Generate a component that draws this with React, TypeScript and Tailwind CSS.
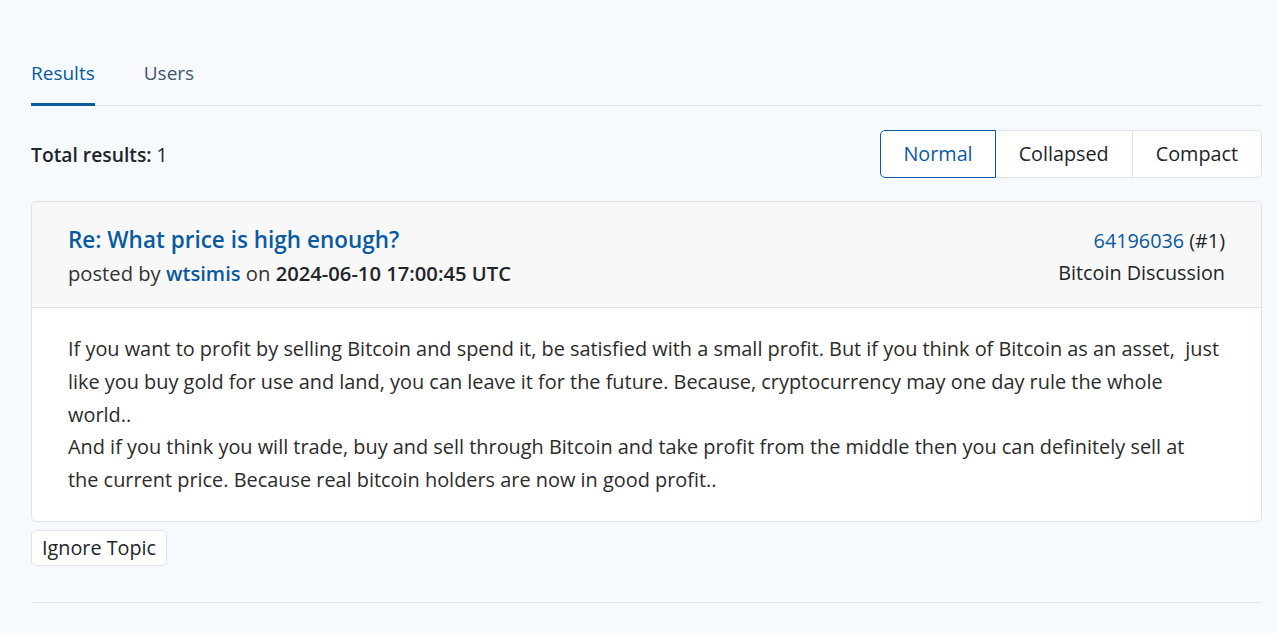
import React, { useState } from "react";

const FONT = "font-['Segoe_UI','Open_Sans','Noto_Sans',sans-serif]";

const modes = ["Normal", "Collapsed", "Compact"];

export default function App() {
  const [tab, setTab] = useState("results");
  const [mode, setMode] = useState("Normal");

  return (
    <div className={`min-h-screen bg-[#f6f9fe] text-[#212529] ${FONT}`}>
      <main className="pl-[31px] pr-[15px] pt-[59px]">
        {/* tabs */}
        <div className="flex gap-[49px] border-b border-[#dee2e6]">
          <button
            onClick={() => setTab("results")}
            className={`-mb-px pb-[16px] text-[19px] leading-[28px] border-b-[3px] ${
              tab === "results"
                ? "border-[#0a5aa0] text-[#0a5aa0]"
                : "border-transparent text-[#41566b]"
            }`}
          >
            Results
          </button>
          <button
            onClick={() => setTab("users")}
            className={`-mb-px pb-[16px] text-[19px] leading-[28px] border-b-[3px] ${
              tab === "users"
                ? "border-[#0a5aa0] text-[#0a5aa0]"
                : "border-transparent text-[#41566b]"
            }`}
          >
            Users
          </button>
        </div>

        {/* toolbar */}
        <div className="mt-[24px] flex items-center justify-between">
          <div className="text-[19.3px] pt-[2px]">
            <span className="font-semibold">Total results:</span> 1
          </div>
          <div className="flex">
            {modes.map((m, i) => (
              <button
                key={m}
                onClick={() => setMode(m)}
                className={`h-[48px] text-[19.8px] border ${
                  i === 0 ? "rounded-l-[5px] px-[22px]" : "-ml-px px-[23px]"
                } ${i === modes.length - 1 ? "rounded-r-[5px]" : ""} ${
                  mode === m
                    ? "relative z-10 border-[#0a5aa0] text-[#0a5aa0] bg-white"
                    : "border-[#dee2e6] text-[#212529] bg-white"
                }`}
              >
                {m}
              </button>
            ))}
          </div>
        </div>

        {/* result card */}
        <div className="mt-[23px] rounded-[5px] border border-[#dee2e6] bg-white overflow-hidden">
          <div className="flex justify-between bg-[#f8f8f8] border-b border-[#dee2e6] px-[36px] pt-[22px] pb-[17px]">
            <div>
              <a href="#" className="block text-[22.5px] font-semibold text-[#0a5aa0] leading-[32px]">
                Re: What price is high enough?
              </a>
              <div className="text-[20.2px] leading-[34px] text-[#333]">
                posted by{" "}
                <a href="#" className="font-semibold text-[#0a5aa0]">
                  wtsimis
                </a>{" "}
                on <span className="font-semibold text-[#212529]">2024-06-10 17:00:45 UTC</span>
              </div>
            </div>
            <div className="text-right text-[19.8px] leading-[32px] pt-[1px]">
              <div>
                <a href="#" className="text-[#0a5aa0]">64196036</a> (#1)
              </div>
              <div>Bitcoin Discussion</div>
            </div>
          </div>
          <div className="px-[36px] pt-[25px] pb-[24px] text-[19.9px] leading-[32.75px] text-[#2b2b2b]">
            If you want to profit by selling Bitcoin and spend it, be satisfied with a small profit. But if you think of Bitcoin as an asset,&nbsp; just
            <br />
            like you buy gold for use and land, you can leave it for the future. Because, cryptocurrency may one day rule the whole
            <br />
            world..
            <br />
            And if you think you will trade, buy and sell through Bitcoin and take profit from the middle then you can definitely sell at
            <br />
            the current price. Because real bitcoin holders are now in good profit..
          </div>
        </div>

        <button className="mt-[8px] rounded-[5px] border border-[#dee2e6] bg-white px-[10px] h-[36px] text-[19.8px]">
          Ignore Topic
        </button>

        <div className="mt-[36px] border-b border-[#e3e7ec]" />
      </main>
    </div>
  );
}
